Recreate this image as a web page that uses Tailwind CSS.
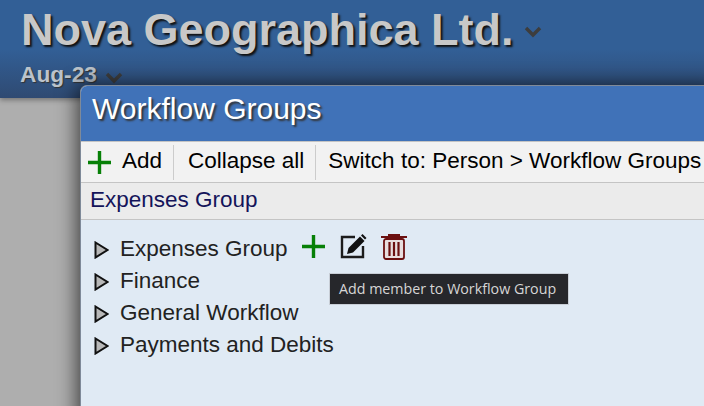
<!DOCTYPE html>
<html><head><meta charset="utf-8"><script src="https://cdn.jsdelivr.net/npm/@tailwindcss/browser@4"></script></head>
<body class="m-0 overflow-hidden">
<div class="relative w-[704px] h-[406px] overflow-hidden bg-[#aeaeae] font-['Liberation_Sans',Arial,sans-serif]">
  <header class="h-[98px] bg-[linear-gradient(to_bottom,#325f96_0%,#325f96_50%,#2f4a72_100%)] pl-[21px] shadow-[0_2px_5px_rgba(0,0,0,0.35)]">
    <div class="flex items-center h-[59px]">
      <span class="text-[45px] leading-none font-bold text-[#c8c8c8] [text-shadow:2px_2px_2px_#111]">Nova Geographica Ltd.</span>
      <svg class="ml-[10px] mt-[4px]" width="18" height="12" viewBox="0 0 18 12"><path d="M2 2l7 7 7-7" fill="none" stroke="#3d3d3d" stroke-width="3.4"/></svg>
    </div>
    <div class="flex items-center h-[30px]">
      <span class="-ml-[1px] text-[22.7px] leading-none font-bold text-[#bcc3cb] [text-shadow:1px_1px_1px_#333]">Aug-23</span>
      <svg class="ml-[8px] mt-[7px]" width="18" height="12" viewBox="0 0 18 12"><path d="M2 2l7 7 7-7" fill="none" stroke="#3d3d3d" stroke-width="3.4"/></svg>
    </div>
  </header>
  <div class="absolute left-[80px] top-[85px] w-[640px] h-[340px] rounded-t-[7px] shadow-[-3px_0_20px_rgba(0,0,0,0.65)] overflow-hidden bg-[#e0eaf4] border-t border-l border-[#7f8a99]">
    <div class="h-[55px] bg-[#4072b8] pl-[11px] pt-[8px] text-[30px] leading-[30px] text-white [text-shadow:2px_2px_2px_#333]">Workflow Groups</div>
    <div class="h-[42px] bg-[#f2f2f2] border-t border-b border-[#c4c4c4] flex items-center text-[22.5px] text-black">
      <div class="flex items-center h-[35px] pl-[6px] pr-[11px] border-r border-[#cccccc]">
        <svg width="25" height="25" viewBox="0 0 25 25"><path d="M12.5 1v23M1 12.5h23" stroke="#078007" stroke-width="3.4"/></svg>
        <span class="ml-[10px] -mt-[2px]">Add</span>
      </div>
      <div class="flex items-center h-[35px] pl-[14px] pr-[11px] pb-[2px] border-r border-[#cccccc]">Collapse all</div>
      <div class="flex items-center h-[35px] pl-[12px] pb-[2px] whitespace-nowrap">Switch to: Person &gt; Workflow Groups</div>
    </div>
    <div class="h-[37px] bg-[#ebebeb] border-b border-[#c4c4c4] pl-[9px] pb-[2px] flex items-center text-[22.5px] text-[#14145a]">Expenses Group</div>
    <div class="pl-[13px] pt-[13px] text-[22.5px] text-[#222222]">
      <div class="flex items-center h-[32px]">
        <svg class="mt-[2px]" width="15" height="18" viewBox="0 0 15 18"><path d="M1.5 1.5l12 7.500-12 7.500z" fill="#b8b8b8" stroke="#111" stroke-width="2"/></svg>
        <span class="ml-[11px]">Expenses Group</span>
        <svg class="ml-[13px] -mt-[6px]" width="25" height="25" viewBox="0 0 25 25"><path d="M12.5 1v23M1 12.5h23" stroke="#078007" stroke-width="3.4"/></svg>
        <svg class="ml-[14px] -mt-[5px]" width="27" height="27" viewBox="0 0 27 27"><path d="M23 13v11H2V4h13" fill="none" stroke="#1c1c1c" stroke-width="2.4"/><path d="M7 21l1.500-6L20 3.500l4.500 4.500L13 19.500z" fill="#111"/><path d="M21 2.500l1.500-1.500 4 4-1.500 1.500z" fill="#111"/></svg>
        <svg class="ml-[14px] -mt-[5px]" width="26" height="27" viewBox="0 0 26 27"><path d="M0 4h26" stroke="#6b1010" stroke-width="1.800"/><path d="M7 3.500V1h12v2.500z" fill="#6b1010"/><rect x="3" y="6" width="20" height="20" rx="2" fill="#e8dede" stroke="#6b1010" stroke-width="1.800"/><path d="M8.500 9v14M13 9v14M17.500 9v14" stroke="#6b1010" stroke-width="2.200"/></svg>
      </div>
      <div class="flex items-center h-[32px]">
        <svg class="mt-[2px]" width="15" height="18" viewBox="0 0 15 18"><path d="M1.5 1.5l12 7.500-12 7.500z" fill="#b8b8b8" stroke="#111" stroke-width="2"/></svg>
        <span class="ml-[11px]">Finance</span>
      </div>
      <div class="flex items-center h-[32px]">
        <svg class="mt-[2px]" width="15" height="18" viewBox="0 0 15 18"><path d="M1.5 1.5l12 7.500-12 7.500z" fill="#b8b8b8" stroke="#111" stroke-width="2"/></svg>
        <span class="ml-[11px]">General Workflow</span>
      </div>
      <div class="flex items-center h-[32px]">
        <svg class="mt-[2px]" width="15" height="18" viewBox="0 0 15 18"><path d="M1.5 1.5l12 7.500-12 7.500z" fill="#b8b8b8" stroke="#111" stroke-width="2"/></svg>
        <span class="ml-[11px]">Payments and Debits</span>
      </div>
    </div>
  </div>
  <div class="absolute left-[329px] top-[273px] w-[240px] h-[32px] bg-[#26272b] border border-[#c8ced6] flex items-center pl-[9px] text-[14.25px] text-[#d6d6d6] whitespace-nowrap font-['Open_Sans',sans-serif]">Add member to Workflow Group</div>
</div>
</body></html>
